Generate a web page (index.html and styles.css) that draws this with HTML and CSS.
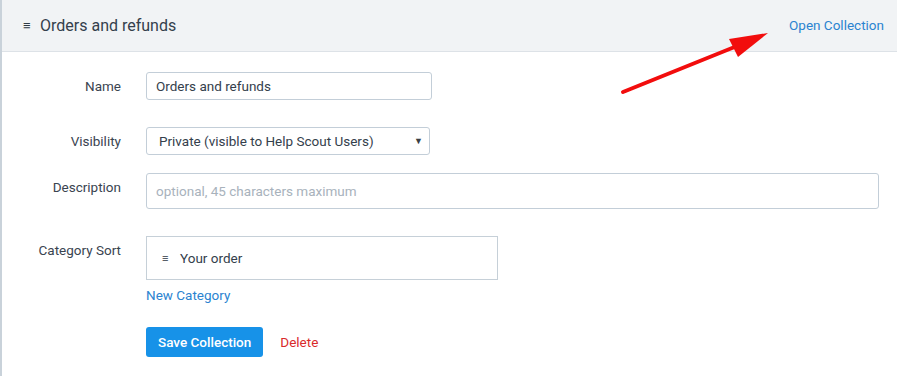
FILE: index.html
```html
<!DOCTYPE html>
<html lang="en">

<head>
    <meta charset="UTF-8">
    <title>Orders and refunds</title>
    <link rel="stylesheet" href="styles.css">
</head>

<body>
    <div class="panel">
        <div class="panel-header">
            <div class="title">
                <span class="handle">&#8801;</span>
                <span>Orders and refunds</span>
            </div>
            <a href="#" class="open-link">Open Collection</a>
        </div>

        <form class="panel-body">
            <div class="row row-name">
                <label class="label">Name</label>
                <input type="text" class="input input-name" value="Orders and refunds">
            </div>

            <div class="row row-visibility">
                <label class="label">Visibility</label>
                <div class="select">
                    <span>Private (visible to Help Scout Users)</span>
                    <span class="caret">&#9660;</span>
                </div>
            </div>

            <div class="row row-description">
                <label class="label">Description</label>
                <input type="text" class="input input-description" placeholder="optional, 45 characters maximum">
            </div>

            <div class="row row-sort">
                <label class="label">Category Sort</label>
                <div class="sort-field">
                    <div class="sort-box">
                        <span class="handle small">&#8801;</span>
                        <span>Your order</span>
                    </div>
                    <a href="#" class="new-category">New Category</a>
                </div>
            </div>

            <div class="row row-actions">
                <span class="label"></span>
                <div class="actions">
                    <button type="button" class="btn-save">Save Collection</button>
                    <a href="#" class="delete-link">Delete</a>
                </div>
            </div>
        </form>

        <!-- annotation arrow pointing at the link -->
        <svg class="annotation" viewBox="0 0 897 376" width="897" height="376">
            <line x1="623" y1="92" x2="742" y2="44" stroke="#f20d0d" stroke-width="4" stroke-linecap="round" />
            <polygon points="768,33 729,39 738,57" fill="#f20d0d" />
        </svg>
    </div>
</body>

</html>
```

FILE: styles.css
```css
* {
    margin: 0;
    padding: 0;
    box-sizing: border-box;
}

body,
html {
    width: 897px;
    height: 376px;
    overflow: hidden;
    background: #ffffff;
    font-family: Roboto, 'Liberation Sans', sans-serif;
    font-size: 13.5px;
    color: #3c4650;
}

.panel {
    position: relative;
    height: 100%;
    border-left: 2px solid #c9d2da;
}

.panel-header {
    height: 52px;
    background: #f1f3f5;
    border-bottom: 1px solid #dde2e7;
    display: flex;
    align-items: center;
    justify-content: space-between;
    padding: 0 13px 1px 21px;
}

.title {
    display: flex;
    align-items: center;
    gap: 8px;
    font-size: 16px;
    color: #34404c;
}

.handle {
    font-size: 13px;
    color: #2f3a45;
    width: 9px;
}

.open-link {
    color: #2b83d0;
    text-decoration: none;
    font-size: 13.5px;
    margin-top: -1px;
}

.panel-body {
    padding-top: 20px;
}

.row {
    display: flex;
    align-items: flex-start;
}

.label {
    width: 119px;
    flex: none;
    text-align: right;
    margin-right: 25px;
    padding-top: 6px;
    color: #3a4450;
}

.input {
    font-family: inherit;
    font-size: 13.5px;
    color: #34404c;
    border: 1px solid #c3ced8;
    border-radius: 3px;
    outline: none;
    padding: 0 9px;
}

.input::placeholder {
    color: #a8b2bc;
}

.input-name {
    width: 286px;
    height: 28px;
}

.row-visibility {
    margin-top: 27px;
}

.select {
    width: 284px;
    height: 28px;
    border: 1px solid #c3ced8;
    border-radius: 3px;
    display: flex;
    align-items: center;
    justify-content: space-between;
    padding: 0 6px 0 12px;
    color: #34404c;
}

.caret {
    font-size: 9px;
    color: #3a3f44;
}

.row-description {
    margin-top: 18px;
}

.input-description {
    width: 733px;
    height: 36px;
}

.row-sort {
    margin-top: 27px;
}

.sort-field {
    display: flex;
    flex-direction: column;
}

.sort-box {
    width: 352px;
    height: 44px;
    border: 1px solid #c6d0d8;
    display: flex;
    align-items: center;
    gap: 9px;
    padding: 0 15px;
    color: #34404c;
}

.handle.small {
    font-size: 11px;
}

.new-category {
    color: #2b83d0;
    text-decoration: none;
    margin-top: 7px;
}

.row-actions {
    margin-top: 24px;
}

.actions {
    display: flex;
    align-items: center;
    gap: 17px;
}

.btn-save {
    height: 30px;
    padding: 0 12px;
    background: #1792e8;
    color: #ffffff;
    border: none;
    border-radius: 3px;
    font-family: inherit;
    font-size: 13.5px;
    font-weight: 500;
}

.delete-link {
    color: #d92b2b;
    text-decoration: none;
}

.annotation {
    position: absolute;
    top: 0;
    left: -2px;
    pointer-events: none;
}
```
